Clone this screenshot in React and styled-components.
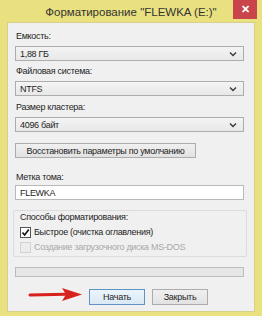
import React from 'react';
import styled, { createGlobalStyle } from 'styled-components';

const GlobalStyle = createGlobalStyle`
    html, body {
        margin: 0;
        padding: 0;
        background: #ffffff;
    }
    body {
        width: 262px;
        height: 320px;
        overflow: hidden;
        font-family: "Liberation Sans", Arial, sans-serif;
    }
`;

const Page = styled.div`
    width: 262px;
    height: 320px;
    background: #fbfbfb;
    position: relative;
`;

const Window = styled.div`
    width: 262px;
    height: 316px;
    box-sizing: border-box;
    background: #e9e17f;
    padding: 0 7px 4px 7px;
    display: flex;
    flex-direction: column;
`;

const TitleBar = styled.div`
    height: 22px;
    display: flex;
    align-items: flex-start;
    margin: 0 -2px 0 0;
`;

const Title = styled.div`
    flex: 1;
    text-align: center;
    padding: 6px 0 0 22px;
    font-size: 11.5px;
    color: #333333;
    white-space: nowrap;
`;

const CloseButton = styled.div`
    width: 24px;
    height: 19px;
    background: #c9444b;
    color: #ffffff;
    display: flex;
    align-items: center;
    justify-content: center;
    font-size: 11px;
    font-weight: bold;
`;

const Client = styled.div`
    flex: 1;
    background: #f0f0f0;
    border: 1px solid #d6d08a;
    padding: 7px 10px 0 7px;
    display: flex;
    flex-direction: column;
    font-size: 9px;
    letter-spacing: -0.3px;
    color: #1e1e1e;
`;

const Label = styled.div`
    height: 12px;
    line-height: 12px;
    margin: ${p => p.$top || 0}px 0 ${p => (p.$below === undefined ? 4 : p.$below)}px 1px;
`;

const Combo = styled.div`
    height: 15px;
    box-sizing: border-box;
    border: 1px solid #adadad;
    background: linear-gradient(#f4f4f4, #e8e8e8);
    display: flex;
    align-items: center;
    justify-content: space-between;
    padding: 0 6px 0 4px;
`;

const Chevron = () => (
    <svg width="8" height="6" viewBox="0 0 8 6">
        <path d="M1 1.5 L4 4.5 L7 1.5" fill="none" stroke="#3a3a3a" strokeWidth="1.4" />
    </svg>
);

const Button = styled.div`
    height: ${p => p.$height || 16}px;
    box-sizing: border-box;
    width: ${p => p.$width}px;
    border: 1px solid ${p => (p.$default ? '#5f93c4' : '#acacac')};
    background: ${p => (p.$default ? 'linear-gradient(#eaf4fc, #dbe9f5)' : 'linear-gradient(#f0f0f0, #e2e2e2)')};
    display: flex;
    align-items: center;
    justify-content: center;
    white-space: nowrap;
`;

const ResetRow = styled.div`
    margin-top: 11px;
    display: flex;
`;

const TextBox = styled.div`
    height: 15px;
    box-sizing: border-box;
    border: 1px solid #b9b9b9;
    background: #ffffff;
    display: flex;
    align-items: center;
    padding: 0 4px;
`;

const Group = styled.div`
    margin: 10px -3px 0 -2px;
    height: 47px;
    box-sizing: border-box;
    border: 1px solid #dcdcdc;
    border-radius: 2px;
    padding: 0 7px 0 6px;
    display: flex;
    flex-direction: column;
    gap: 3px;
`;

const GroupTitle = styled.div`
    height: 12px;
    line-height: 12px;
`;

const CheckRow = styled.div`
    display: flex;
    align-items: center;
    gap: 3px;
    height: 12px;
    color: ${p => (p.$disabled ? '#a8a8a8' : '#1e1e1e')};
`;

const Box = styled.div`
    width: 9px;
    height: 9px;
    border: 1px solid ${p => (p.$disabled ? '#d2d2d2' : '#555555')};
    background: ${p => (p.$disabled ? '#ececec' : '#ffffff')};
    display: flex;
    align-items: center;
    justify-content: center;
`;

const Progress = styled.div`
    margin-top: 10px;
    height: 10px;
    box-sizing: border-box;
    border: 1px solid #bcbcbc;
    background: #e6e6e6;
`;

const Actions = styled.div`
    margin-top: 12px;
    display: flex;
    gap: 7px;
    padding-left: 74px;
`;

const Arrow = styled.svg`
    position: absolute;
    left: 28px;
    top: 287px;
`;

export default function App() {
    return (
        <Page>
            <GlobalStyle />
            <Window>
                <TitleBar>
                    <Title>Форматирование "FLEWKA (E:)"</Title>
                    <CloseButton>✕</CloseButton>
                </TitleBar>
                <Client>
                    <Label>Емкость:</Label>
                    <Combo>1,88 ГБ<Chevron /></Combo>
                    <Label $top={4}>Файловая система:</Label>
                    <Combo>NTFS<Chevron /></Combo>
                    <Label $top={5}>Размер кластера:</Label>
                    <Combo>4096 байт<Chevron /></Combo>
                    <ResetRow>
                        <Button $width={181} $height={15}>Восстановить параметры по умолчанию</Button>
                    </ResetRow>
                    <Label $top={13} $below={2}>Метка тома:</Label>
                    <TextBox>FLEWKA</TextBox>
                    <Group>
                        <GroupTitle>Способы форматирования:</GroupTitle>
                        <CheckRow>
                            <Box>
                                <svg width="9" height="9" viewBox="0 0 9 9">
                                    <path d="M1.5 4.5 L3.6 7 L7.8 1.5" fill="none" stroke="#111" strokeWidth="1.6" />
                                </svg>
                            </Box>
                            Быстрое (очистка оглавления)
                        </CheckRow>
                        <CheckRow $disabled>
                            <Box $disabled />
                            Создание загрузочного диска MS-DOS
                        </CheckRow>
                    </Group>
                    <Progress />
                    <Actions>
                        <Button $width={56} $default>Начать</Button>
                        <Button $width={56}>Закрыть</Button>
                    </Actions>
                </Client>
            </Window>
            <Arrow width="56" height="16" viewBox="0 0 56 16">
                <path d="M2 8 L38 7.2" stroke="#d8201c" strokeWidth="3" strokeLinecap="round" />
                <path d="M34 1 L54 7.5 L34 14 L38 7.5 Z" fill="#d8201c" />
            </Arrow>
        </Page>
    );
}
